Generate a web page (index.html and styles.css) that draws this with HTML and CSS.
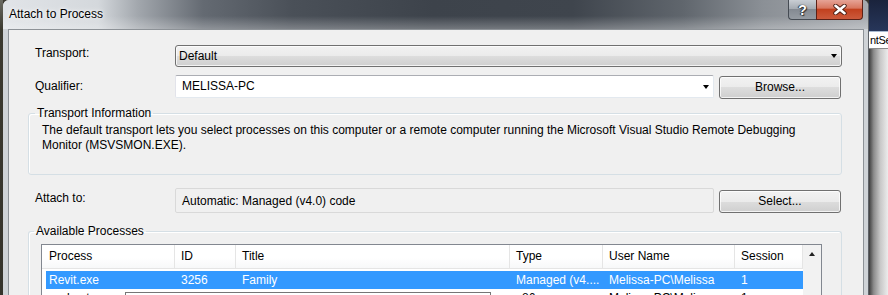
FILE: index.html
```html
<!DOCTYPE html>
<html>
<head>
<meta charset="utf-8">
<title>Attach to Process</title>
<link rel="stylesheet" href="styles.css">
</head>
<body>
<div class="screen">
  <div class="edge-left"></div>
  <div class="window">
    <div class="titlebar">
      <span class="title">Attach to Process</span>
      <div class="caption-buttons">
        <div class="cap help">?</div>
        <div class="cap close">
          <svg width="14" height="11" viewBox="0 0 14 11">
            <path d="M2.5 1.8 L11.5 9.2 M11.5 1.8 L2.5 9.2" stroke="#4a1c12" stroke-width="4.4" stroke-linecap="round"/>
            <path d="M2.5 1.8 L11.5 9.2 M11.5 1.8 L2.5 9.2" stroke="#ffffff" stroke-width="2.6" stroke-linecap="round"/>
          </svg>
        </div>
      </div>
    </div>
    <div class="frame">
      <div class="client">
        <div class="row r1">
          <label class="lbl">Transport:</label>
          <div class="combo combo-list"><span>Default</span><i class="arrow"></i></div>
        </div>
        <div class="row r2">
          <label class="lbl">Qualifier:</label>
          <div class="pair">
            <div class="combo combo-edit"><span>MELISSA-PC</span><i class="arrow"></i></div>
            <div class="btn">Browse...</div>
          </div>
        </div>
        <fieldset class="group info">
          <legend>Transport Information</legend>
          <p>The default transport lets you select processes on this computer or a remote computer running the Microsoft Visual Studio Remote Debugging<br>Monitor (MSVSMON.EXE).</p>
        </fieldset>
        <div class="row r3">
          <label class="lbl">Attach to:</label>
          <div class="pair">
            <div class="readonly">Automatic: Managed (v4.0) code</div>
            <div class="btn">Select...</div>
          </div>
        </div>
        <fieldset class="group procs">
          <legend>Available Processes</legend>
          <div class="lv">
            <div class="lv-main">
              <div class="lv-head">
                <span>Process</span><span>ID</span><span>Title</span><span>Type</span><span>User Name</span><span>Session</span>
              </div>
              <div class="lv-rows">
                <div class="lv-row selected">
                  <span>Revit.exe</span><span>3256</span><span>Family</span><span>Managed (v4....</span><span>Melissa-PC\Melissa</span><span>1</span>
                </div>
                <div class="lv-row">
                  <span>svchost.exe</span><span>4120</span><span></span><span>x86</span><span>Melissa-PC\Melissa</span><span>1</span>
                </div>
              </div>
            </div>
            <div class="scrollbar"><div class="sb-up"><i class="arrow-up"></i></div></div>
            <div class="tip"></div>
          </div>
        </fieldset>
      </div>
    </div>
  </div>
  <div class="behind">
    <div class="behind-top"></div>
    <div class="behind-tab">ntSe</div>
    <div class="behind-body"></div>
  </div>
</div>
</body>
</html>
```

FILE: styles.css
```css
* { box-sizing: border-box; }
html, body { margin: 0; padding: 0; }
body {
  width: 888px;
  height: 295px;
  overflow: hidden;
  font-family: "Liberation Sans", Arial, sans-serif;
  font-size: 12px;
  color: #000;
  background: #3c3a32;
}
.screen { display: flex; height: 295px; overflow: hidden; }
.edge-left { width: 3px; flex: none; background: linear-gradient(#6a6a62, #3b392f 30px, #35332b); }

.window {
  width: 866px;
  flex: none;
  display: flex;
  flex-direction: column;
  border-right: 1px solid #5e6268;
  border-radius: 6px 6px 0 0;
  overflow: hidden;
  background: #cfd3d7;
}
.titlebar {
  height: 29px;
  flex: none;
  display: flex;
  justify-content: space-between;
  align-items: flex-start;
  padding: 0 5px 0 6px;
  background:
    linear-gradient(180deg, rgba(255,255,255,0) 55%, rgba(255,255,255,0.28) 100%),
    linear-gradient(90deg, #e1e4e8 0px, #d4d8dc 95px, #a2a7ad 135px, #646a72 200px, #4a5058 290px, #3d434b 430px, #3f454d 570px, #60666d 680px, #8b9096 760px, #a6aaaf 865px);
}
.title {
  padding-top: 7px;
  line-height: 15px;
  color: #000;
  text-shadow: 0 0 6px #fff, 0 0 3px #fff;
}
.caption-buttons { display: flex; height: 20px; }
.cap {
  height: 20px;
  display: flex;
  align-items: center;
  justify-content: center;
  border: 1px solid #454b53;
  border-top: none;
}
.help {
  width: 28px;
  border-right: none;
  border-radius: 0 0 0 4px;
  background: linear-gradient(#c9ced4 0%, #a6acb3 45%, #848a92 50%, #959ba2 100%);
  color: #fff;
  font-weight: bold;
  font-size: 14px;
  text-shadow: 0 0 1px #222, 1px 1px 1px #333, -1px 0 1px #333;
}
.close {
  width: 47px;
  border-color: #5c2116;
  border-radius: 0 0 4px 0;
  background: linear-gradient(#e6a396 0%, #d87760 42%, #c2411f 50%, #cc5a3c 100%);
}

.frame {
  flex: 1;
  display: flex;
  padding: 0 4px 0 5px;
  background: #cfd3d7;
}
.client {
  flex: 1;
  border: 1px solid #8d9297;
  border-bottom: none;
  background: #f0f0f0;
  padding: 15px 21px 0 19px;
}

.row { display: grid; grid-template-columns: 147px 1fr; }
.lbl { padding-left: 7px; line-height: 15px; }
.r1 { height: 22px; }
.r1 .lbl { padding-top: 1px; }
.r2 { margin-top: 8px; height: 24px; }
.r2 .lbl { padding-top: 4px; }
.r3 { margin-top: 13px; height: 25px; }
.r3 .lbl { padding-top: 3px; }

.pair {
  display: grid;
  grid-template-columns: 1fr 122px;
  column-gap: 5px;
  padding-right: 1px;
}

.combo {
  display: flex;
  align-items: center;
  justify-content: space-between;
  line-height: 15px;
  white-space: nowrap;
}
.combo-list {
  height: 22px;
  padding: 0 4px 0 3px;
  border: 1px solid #707070;
  border-radius: 3px;
  background: linear-gradient(#f2f2f2 0%, #ebebeb 50%, #dddddd 50%, #cfcfcf 100%);
  box-shadow: inset 0 0 0 1px rgba(255,255,255,0.75);
}
.combo-edit {
  height: 23px;
  align-self: start;
  padding: 0 4px 0 6px;
  background: #fff;
  border: 1px solid;
  border-color: #abadb3 #e3e9ef #e3e9ef #e2e3ea;
  border-radius: 2px;
}
.arrow {
  width: 0;
  height: 0;
  border-left: 3.5px solid transparent;
  border-right: 3.5px solid transparent;
  border-top: 4px solid #000;
}

.btn {
  height: 23px;
  align-self: end;
  display: flex;
  align-items: center;
  justify-content: center;
  border: 1px solid #707070;
  border-radius: 3px;
  background: linear-gradient(#f2f2f2 0%, #ebebeb 50%, #dddddd 50%, #cfcfcf 100%);
  box-shadow: inset 0 0 0 1px rgba(255,255,255,0.75);
  line-height: 15px;
}

.readonly {
  height: 25px;
  display: flex;
  align-items: center;
  padding-left: 6px;
  border: 1px solid #d9d9d9;
  border-radius: 2px;
  background: #f0f0f0;
  white-space: nowrap;
}

.group {
  margin: 7px 0 0;
  padding: 0 0 21px 13px;
  border: 1px solid #d5dfe5;
  border-radius: 3px;
  min-width: 0;
  box-shadow: inset 1px 1px 0 #fff;
}
.group legend {
  padding: 0 2px;
  margin-left: -7px;
  line-height: 15px;
}
.info p { margin: 2px 0 0; line-height: 15px; }

.procs {
  margin-top: 11px;
  padding: 5px 19px 0 12px;
  border-bottom: none;
  height: 120px;
}
.lv {
  position: relative;
  display: flex;
  height: 90px;
  border: 1px solid #828790;
  background: #fff;
  overflow: hidden;
}
.lv-main { width: 761px; flex: none; }
.lv-head {
  display: grid;
  grid-template-columns: 133px 61px 274px 93px 132px 68px;
  height: 24px;
  border-bottom: 1px solid #e5e5e5;
  background: linear-gradient(#ffffff 0%, #ffffff 55%, #f7f8f9 100%);
}
.lv-head span {
  padding-left: 6px;
  border-right: 1px solid #e5e5e5;
  line-height: 23px;
  white-space: nowrap;
}
.lv-head span:first-child { padding-left: 7px; }
.lv-rows { padding-top: 2px; }
.lv-row {
  display: grid;
  grid-template-columns: 129px 61px 274px 93px 132px 68px;
  height: 18px;
  margin-left: 4px;
  line-height: 18px;
}
.lv-row span { padding-left: 6px; white-space: nowrap; overflow: hidden; }
.lv-row span:first-child { padding-left: 3px; }
.lv-row.selected { background: #3399ff; color: #fff; }

.scrollbar { flex: 1; background: #f2f2f2; }
.sb-up { height: 17px; display: flex; align-items: center; justify-content: center; padding-top: 1px; }
.arrow-up {
  width: 0;
  height: 0;
  border-left: 3.5px solid transparent;
  border-right: 3.5px solid transparent;
  border-bottom: 4px solid #222;
}
.tip {
  position: absolute;
  left: 83px;
  top: 47px;
  width: 366px;
  height: 20px;
  background: #fff;
  border: 1px solid #767676;
}

.behind { width: 19px; flex: none; display: flex; flex-direction: column; }
.behind-top {
  height: 32px;
  flex: none;
  background: linear-gradient(#1a233c, #27365a);
  border-bottom: 1px solid #a8bad0;
}
.behind-tab {
  height: 17px;
  flex: none;
  background: #fff;
  font-size: 11px;
  letter-spacing: -0.3px;
  line-height: 17px;
  white-space: nowrap;
  overflow: hidden;
  padding-left: 1px;
  border-bottom: 1px solid #8a8a8a;
}
.behind-body {
  flex: 1;
  background: linear-gradient(90deg, #3e3e3e 0%, #8c8c8c 25%, #c8c8c8 60%, #ececec 100%);
}
```
